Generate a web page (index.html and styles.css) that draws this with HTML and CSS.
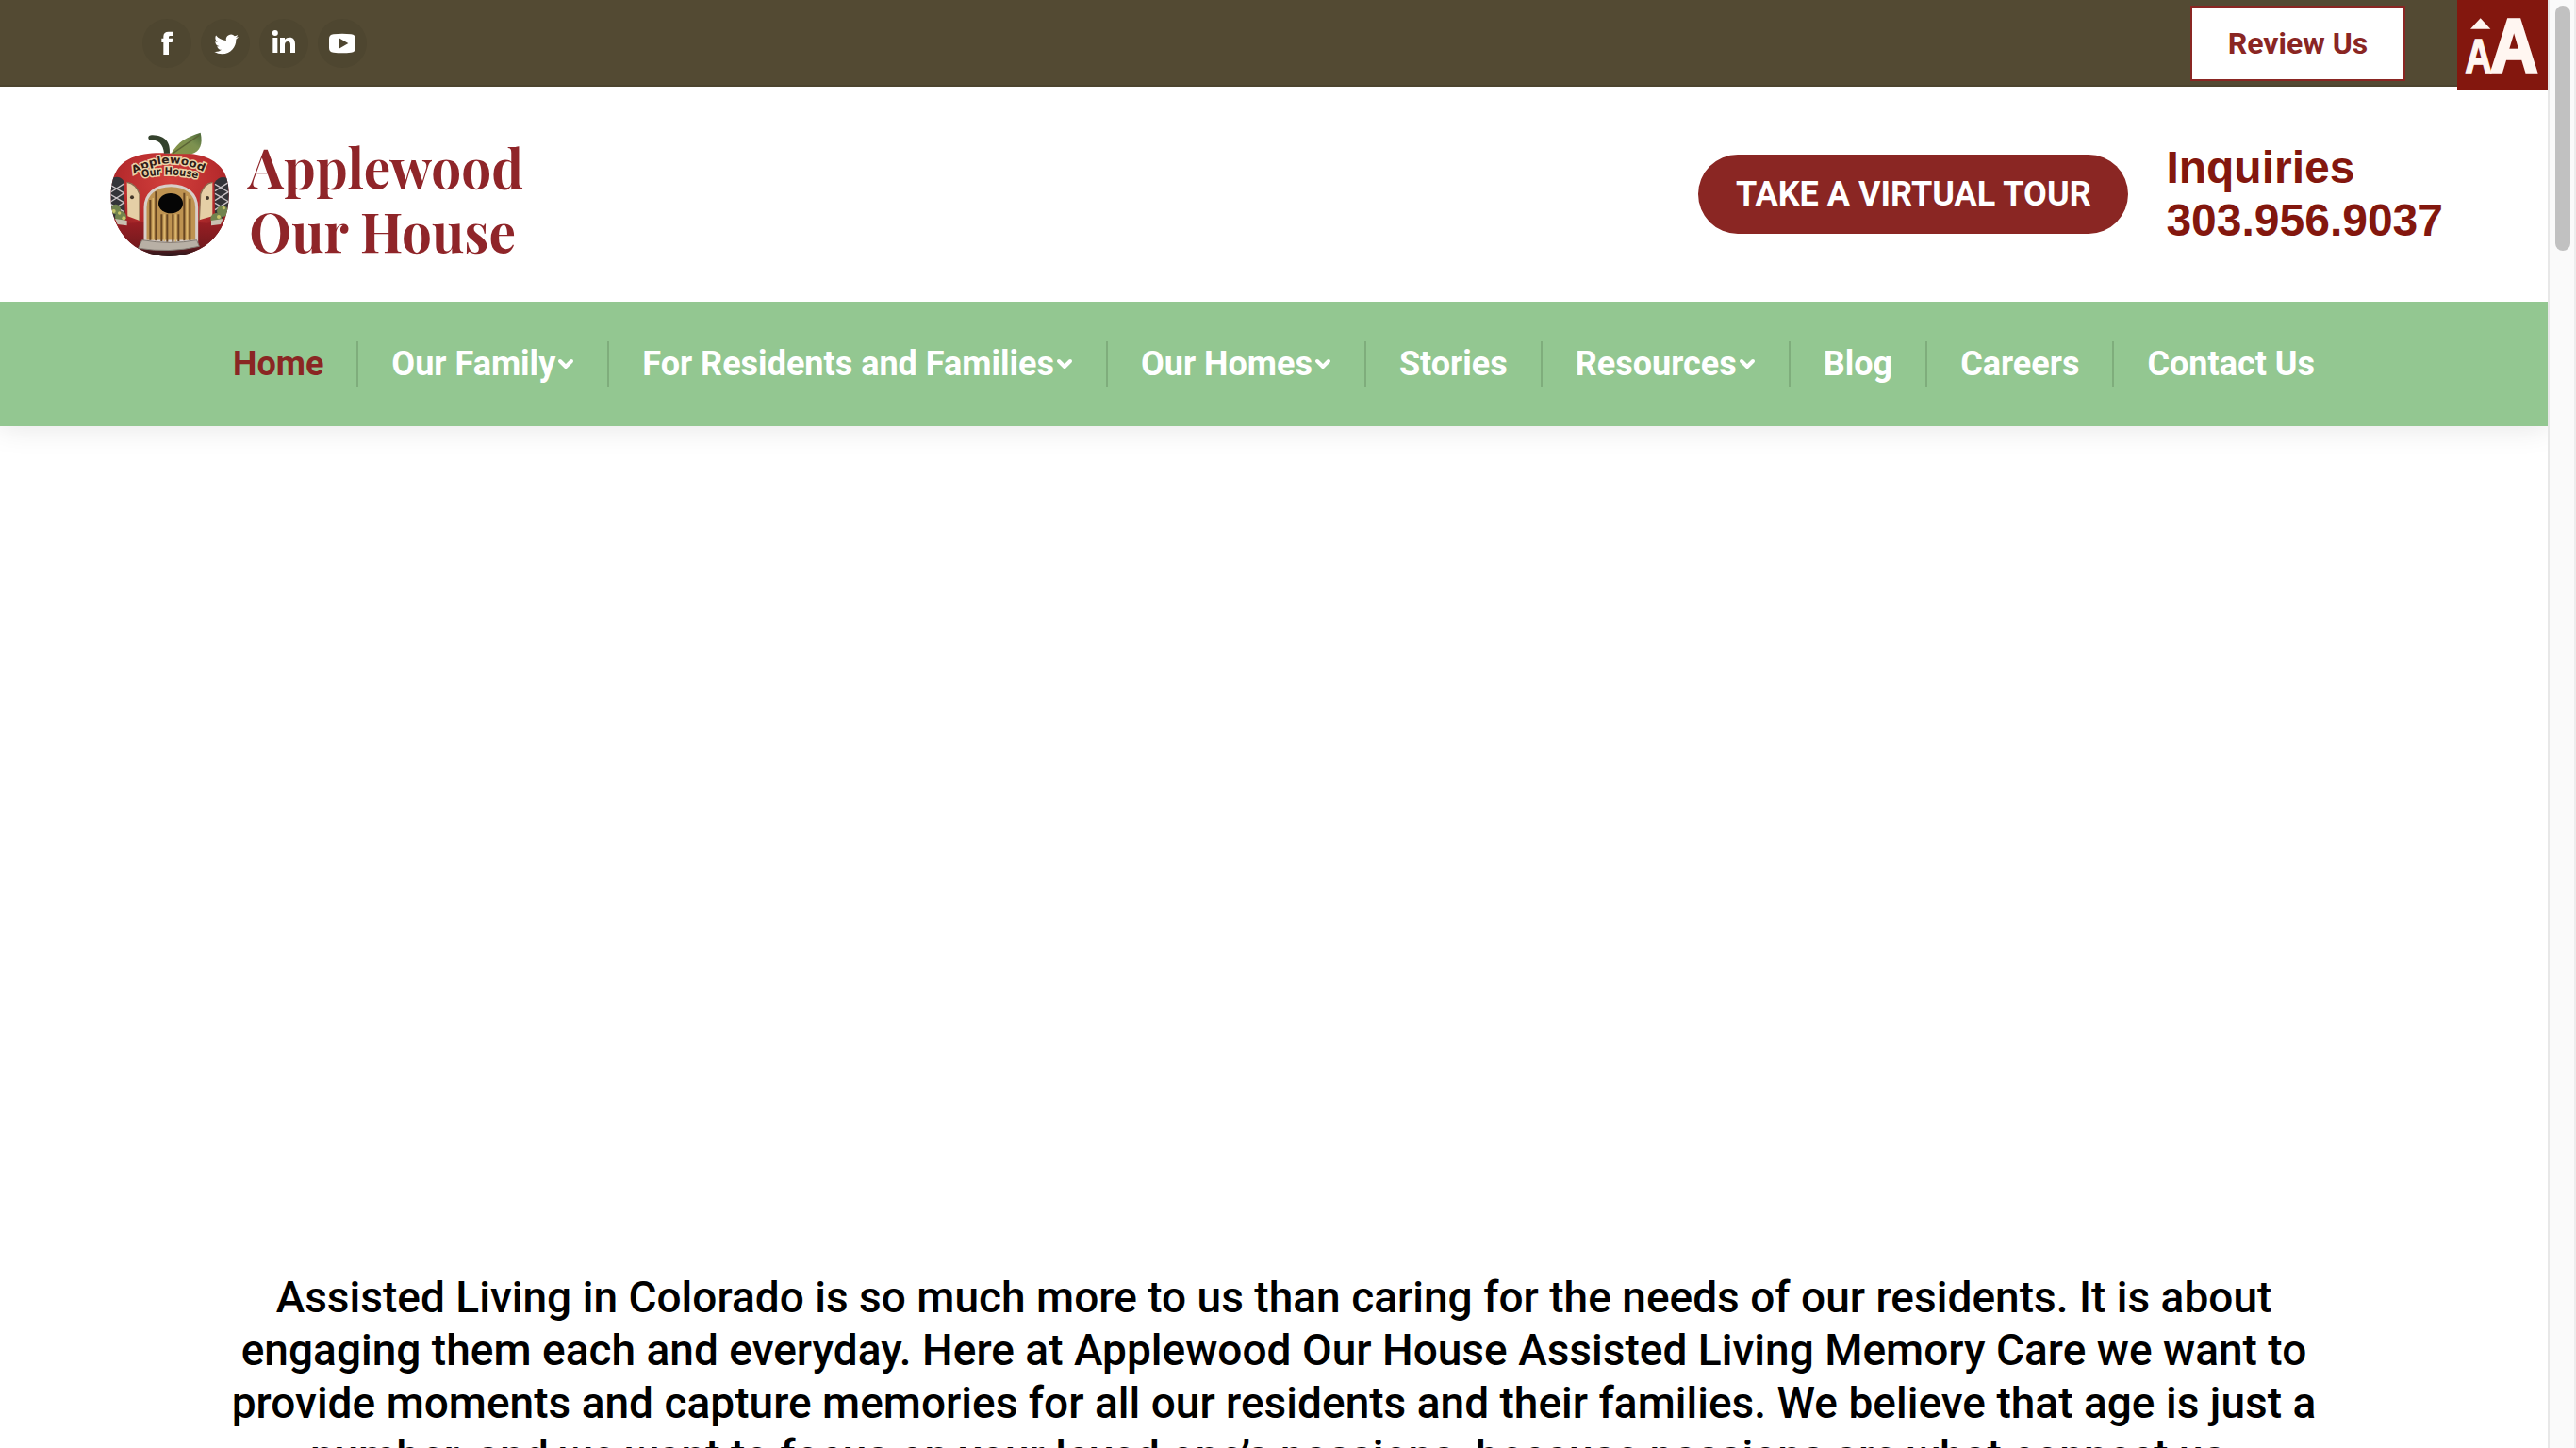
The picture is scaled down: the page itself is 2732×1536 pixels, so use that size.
FILE: index.html
```html
<!DOCTYPE html>
<html lang="en">
<head>
<meta charset="utf-8">
<title>Applewood Our House</title>
<link rel="stylesheet" href="styles.css">
</head>
<body>
<div class="page">
  <header class="masthead">
    <div class="topbar">
      <div class="social">
        <a class="social-link" aria-label="Facebook"><svg viewBox="0 0 156 156"><path d="M67 114V75h-6V62h6V56c0-10 6-15 16-15h14v13h-8c-4 0-5 2-5 5v3h13l-2 13H84v39z"/></svg></a>
        <a class="social-link" aria-label="Twitter"><svg viewBox="0 0 156 156"><path transform="translate(43 42.500) scale(3.200)" d="M23.950 4.570a10 10 0 0 1-2.820.775 4.960 4.960 0 0 0 2.160-2.723c-.95.555-2.005.959-3.127 1.184a4.920 4.920 0 0 0-8.384 4.482C7.690 8.095 4.067 6.130 1.640 3.162a4.820 4.820 0 0 0-.666 2.475c0 1.710.87 3.213 2.188 4.096a4.900 4.900 0 0 1-2.228-.616v.060a4.920 4.920 0 0 0 3.946 4.827 5 5 0 0 1-2.212.085 4.940 4.940 0 0 0 4.604 3.417 9.870 9.870 0 0 1-6.102 2.105c-.39 0-.779-.023-1.170-.067a14 14 0 0 0 7.557 2.209c9.053 0 13.998-7.496 13.998-13.985 0-.21 0-.42-.015-.63a9.940 9.940 0 0 0 2.460-2.548z"/></svg></a>
        <a class="social-link" aria-label="LinkedIn"><svg viewBox="0 0 156 156"><circle cx="50.500" cy="45" r="9"/><path d="M43 60h15v48H43zM66 60h15v6c4-5 9-7 15-7 13 0 18 8 18 21v28H99V83c0-7-2-11-8-11-7 0-10 5-10 11v25H66z"/></svg></a>
        <a class="social-link" aria-label="YouTube"><svg viewBox="0 0 156 156"><path fill-rule="evenodd" d="M50 49q28-3 56 0c10 1 14 6 14 15v28c0 9-4 14-14 15q-28 3-56 0c-10-1-14-6-14-15V64c0-9 4-14 14-15zM66 60v36l31-18z"/></svg></a>
      </div>
      <a class="review">Review Us</a>
      <a class="text-size" aria-label="Text size"><svg viewBox="0 0 288 288"><path d="M42 92 74 58l32 34z"/><text class="small-a" x="25" y="231" font-size="148" textLength="86" lengthAdjust="spacingAndGlyphs">A</text><text class="big-a" x="105" y="229" font-size="240" textLength="151" lengthAdjust="spacingAndGlyphs">A</text></svg></a>
    </div>
    <div class="brandbar">
      <svg class="logo" viewBox="0 0 1440 510" role="img" aria-label="Applewood Our House">
        <defs>
          <radialGradient id="skin" cx=".5" cy=".3" r=".72"><stop offset="0" stop-color="#d2403c"/><stop offset=".55" stop-color="#b72b2d"/><stop offset="1" stop-color="#6e171b"/></radialGradient>
          <linearGradient id="shade" x1="0" y1="0" x2="0" y2="1"><stop offset="0" stop-color="#a01f25"/><stop offset=".7" stop-color="#761a1e"/><stop offset="1" stop-color="#19191d"/></linearGradient>
          <linearGradient id="leaf" x1="0" y1="1" x2="1" y2="0"><stop offset="0" stop-color="#879245"/><stop offset=".6" stop-color="#7c9150"/><stop offset="1" stop-color="#496637"/></linearGradient>
          <clipPath id="apple"><path d="M238 128C150 122 92 142 68 188 48 226 46 300 70 352 98 412 150 454 238 456 326 454 384 412 410 352 434 296 434 224 412 186 386 142 326 122 238 128z"/></clipPath>
        </defs>
        <g clip-path="url(#apple)">
          <path fill="url(#skin)" d="M40 110h400v350H40z"/>
          <path fill="url(#shade)" d="M40 330 110 350 238 340 360 350 440 330v130H40z"/>
          <g fill="#343438"><path d="M50 210q28-16 44 6l4 104-30 20-20-30z"/><path d="M382 222q18-26 42-14l10 90-30 40-20-20z"/></g>
          <g stroke="#c9c2c5" stroke-width="4" fill="none"><path d="M50 228l44 26M50 258l44 26M50 288l44 26M96 224l-44 28M96 254l-44 28M96 284l-44 28M384 226l44 26M384 256l44 26M384 286l44 26M428 220l-44 28M428 250l-44 28M428 280l-44 28"/></g>
          <path fill="#e5cfa6" d="M104 220q28 4 40 38v84l-38-14z"/><path fill="#e5cfa6" d="M376 220q-26 4-38 38l-4 82 42-12z"/>
          <path stroke="#8a6b50" stroke-width="4" fill="none" d="M104 220q28 4 40 38v84M376 220q-26 4-38 38l-4 82"/>
          <circle cx="120" cy="268" r="6" fill="#423629"/><circle cx="360" cy="270" r="6" fill="#423629"/>
          <g fill="#71834e"><circle cx="68" cy="306" r="16"/><circle cx="84" cy="330" r="18"/><circle cx="408" cy="312" r="18"/><circle cx="388" cy="336" r="18"/></g>
          <g fill="#c8c56a"><circle cx="62" cy="312" r="6"/><circle cx="80" cy="318" r="5"/><circle cx="94" cy="334" r="6"/><circle cx="412" cy="302" r="5"/><circle cx="396" cy="330" r="6"/></g>
          <g fill="#c9bfb0"><path d="M66 336l38 6v16l-30-4zM372 342l38-6-8 18-30 4z"/></g>
        </g>
        <path d="M162 408V300c0-42 32-70 82-70s82 28 82 70v108z" fill="#be9351" stroke="#d8cfc9" stroke-width="9"/>
        <path d="M178 404V276M196 406V250M214 408V322M232 410V322M250 410V322M268 408V322M286 406V254M304 404V272" stroke="#674622" stroke-width="6"/>
        <path d="M187 404V270M223 408V322M259 410V322M295 404V264" stroke="#dab66d" stroke-width="5"/>
        <ellipse cx="243" cy="287" rx="39" ry="32" fill="#050505"/>
        <path d="M152 404q92 16 174 0l8 20q-92 22-194 6z" fill="#b8b0a5" stroke="#827b73" stroke-width="3"/>
        <path d="M240 128c2-34-12-56-54-58-10 0-18 4-12 14 30 0 46 14 48 44z" fill="#34422d"/>
        <path d="M244 130c22-40 50-54 94-68 8 36 0 58-28 68z" fill="url(#leaf)"/><path d="M250 128 334 70" stroke="#5b6435" stroke-width="4"/>
        <path id="arc-top" d="M126 194Q240 126 362 194" fill="none"/><path id="arc-low" d="M152 206Q246 184 346 214" fill="none"/>
        <g class="badge"><text textLength="232" lengthAdjust="spacingAndGlyphs"><textPath href="#arc-top">Applewood</textPath></text><text textLength="178" lengthAdjust="spacingAndGlyphs"><textPath href="#arc-low">Our House</textPath></text></g>
        <g class="wordmark"><text x="489" y="240" textLength="876" lengthAdjust="spacingAndGlyphs">Applewood</text><text x="493" y="443" textLength="848" lengthAdjust="spacingAndGlyphs">Our House</text></g>
      </svg>
      <div class="contact">
        <a class="tour">TAKE A VIRTUAL TOUR</a>
        <p class="inquiries">Inquiries<br>303.956.9037</p>
      </div>
    </div>
    <nav class="menu">
      <a class="item active">Home</a>
      <a class="item">Our Family<svg class="chev" viewBox="0 0 18 12"><path d="M3 3l6 6 6-6"/></svg></a>
      <a class="item">For Residents and Families<svg class="chev" viewBox="0 0 18 12"><path d="M3 3l6 6 6-6"/></svg></a>
      <a class="item">Our Homes<svg class="chev" viewBox="0 0 18 12"><path d="M3 3l6 6 6-6"/></svg></a>
      <a class="item">Stories</a>
      <a class="item">Resources<svg class="chev" viewBox="0 0 18 12"><path d="M3 3l6 6 6-6"/></svg></a>
      <a class="item">Blog</a>
      <a class="item">Careers</a>
      <a class="item">Contact Us</a>
    </nav>
  </header>
  <main class="intro">
    <p>Assisted Living in Colorado is so much more to us than caring for the needs of our residents. It is about<br>engaging them each and everyday. Here at Applewood Our House Assisted Living Memory Care we want to<br>provide moments and capture memories for all our residents and their families. We believe that age is just a<br>number, and we want to focus on your loved one’s passions, because passions are what connect us.</p>
  </main>
</div>
<div class="scrollbar"><div class="thumb"></div></div>
</body>
</html>
```

FILE: styles.css
```css
* { box-sizing: border-box; }
body {
  margin: 0;
  height: 1536px;
  overflow: hidden;
  display: flex;
  background: #fff;
  font-family: Roboto, "Liberation Sans", sans-serif;
}
.page { width: 2702px; height: 1536px; overflow: hidden; }
.masthead { height: 452px; box-shadow: 0 0 30px 2px rgba(0, 0, 0, .1); }

.topbar {
  display: flex;
  align-items: flex-start;
  height: 92px;
  padding-left: 151px;
  background: #534a33;
  border-bottom: 2px solid #4c442f;
}
.social { display: flex; gap: 10px; padding-top: 20px; }
.social-link { width: 52px; height: 52px; border-radius: 50%; background: #4e4630; }
.social-link svg { display: block; width: 52px; height: 52px; fill: #fff; }
.review {
  width: 228px;
  height: 80px;
  margin: 6px 55px 0 auto;
  border: 2px solid #8a2623;
  background: #fff;
  color: #8a2623;
  font-size: 32px;
  font-weight: 700;
  line-height: 76px;
  text-align: center;
}
.text-size { width: 96px; height: 96px; background: #83170e; }
.text-size svg { display: block; width: 96px; height: 96px; fill: #fff6f1; }
.text-size text { font-family: "Liberation Sans", Arial, sans-serif; font-weight: 700; stroke: #fff6f1; }
.small-a { stroke-width: 4px; }
.big-a { stroke-width: 10px; }

.brandbar {
  display: flex;
  justify-content: space-between;
  height: 228px;
  padding: 28px 111px 0 100px;
}
.logo { width: 480px; height: 170px; }
.wordmark {
  fill: #8f2529;
  font-family: "Playfair Display", "Liberation Serif", serif;
  font-weight: 700;
  font-size: 176px;
}
.badge {
  fill: #2f1d18;
  stroke: #ecd2a6;
  stroke-width: 9px;
  paint-order: stroke;
  font-family: "DejaVu Sans", sans-serif;
  font-weight: 700;
  font-size: 34px;
}
.contact { display: flex; align-items: flex-start; gap: 40px; }
.tour {
  width: 456px;
  height: 84px;
  margin-top: 44px;
  border-radius: 42px;
  background: #8a2623;
  color: #fff;
  font-size: 36px;
  font-weight: 700;
  line-height: 84px;
  text-align: center;
}
.inquiries {
  margin: 30px 0 0;
  color: #83170e;
  font: 700 48px/56px "Liberation Sans", Arial, sans-serif;
}

.menu {
  display: flex;
  align-items: center;
  justify-content: center;
  height: 132px;
  background: #93c791;
}
.item {
  display: flex;
  align-items: center;
  height: 48px;
  padding: 0 35px;
  color: #fff;
  font-size: 36px;
  font-weight: 700;
  line-height: 48px;
  white-space: nowrap;
}
.item + .item { border-left: 2px solid #7fad7c; }
.active { color: #8a2623; }
.chev { width: 18px; height: 12px; margin-left: 2px; fill: none; stroke: #fff; stroke-width: 4; stroke-linecap: round; stroke-linejoin: round; }

.intro { padding-top: 896px; text-align: center; color: #000; }
.intro p { margin: 0; font-size: 46px; font-weight: 500; line-height: 56px; letter-spacing: .015px; white-space: nowrap; }

.scrollbar {
  width: 30px;
  height: 1536px;
  padding: 6px 4px 0 6px;
  background: #fafafa;
  border-left: 2px solid #e8e8e8;
  border-right: 2px solid #ededed;
}
.thumb { width: 16px; height: 260px; border-radius: 8px; background: #c1c1c1; }
```
